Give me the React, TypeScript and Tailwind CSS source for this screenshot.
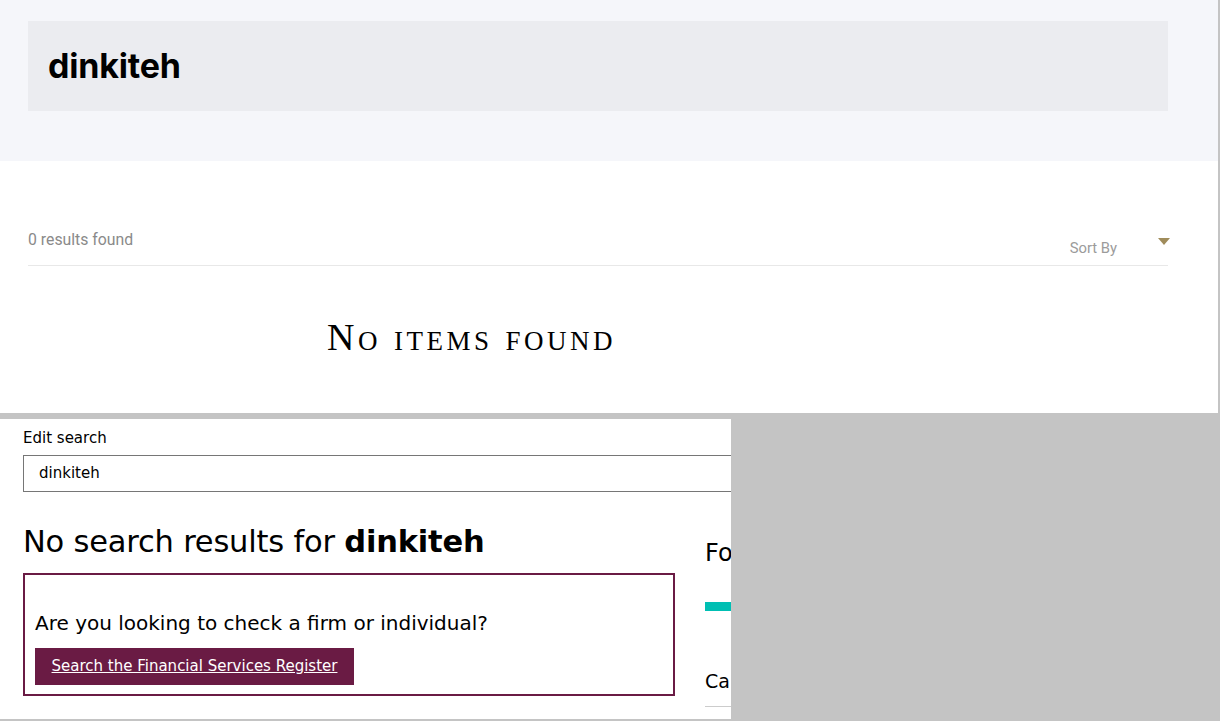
import React from "react";

export default function App() {
  return (
    <div className="w-[1220px] h-[721px] bg-[#c4c4c4] overflow-hidden">
      {/* top panel */}
      <div className="w-[1218px] h-[413px] bg-white">
        <div className="h-[161px] bg-[#f5f6fa] pt-[21px] px-[28px]">
          <div className="h-[90px] w-[1140px] bg-[#ebecf0] flex items-center pl-[20px]">
            <h1
              className="text-[34px] font-bold text-black leading-none tracking-[-0.2px]"
              style={{ fontFamily: "Inter, 'Open Sans', sans-serif" }}
            >
              dinkiteh
            </h1>
          </div>
        </div>
        <div className="px-[28px]" style={{ fontFamily: "Roboto, 'Liberation Sans', sans-serif" }}>
          <div className="w-[1140px] h-[105px] border-b border-[#e8e8e8] flex justify-between">
            <div className="pt-[69px] text-[15.8px] leading-[20px] text-[#8a8a8a]">0 results found</div>
            <div className="flex items-start">
              <div className="pt-[78px] text-[14.8px] leading-[18px] text-[#9b9b9b] mr-[41px]">Sort By</div>
              <svg width="12" height="7" viewBox="0 0 12 7" className="mt-[77px] mr-[-2px]">
                <polygon points="0,0 12,0 6,7" fill="#a08c5b" />
              </svg>
            </div>
          </div>
        </div>
        <div
          className="pl-[327px] pt-[51px] text-[38px] leading-[40px] text-black tracking-[3.5px]"
          style={{ fontFamily: "'Liberation Serif', serif", fontVariant: "small-caps" }}
        >
          No items found
        </div>
      </div>
      {/* bottom panel */}
      <div
        className="mt-[6px] w-[731px] h-[300px] bg-white overflow-hidden text-black"
        style={{ fontFamily: "'DejaVu Sans', Verdana, sans-serif" }}
      >
        <div className="pl-[23px] pt-[10px] flex flex-col">
          <div className="text-[15px] leading-[18px]">Edit search</div>
          <div className="mt-[8px] w-[800px] h-[37px] border border-[#767676] flex items-center pl-[15px] text-[15px]">
            dinkiteh
          </div>
          <div className="flex mt-[33px]">
            <div className="w-[652px] shrink-0">
              <div className="text-[30.5px] leading-[34px] tracking-[-0.2px] whitespace-nowrap">
                No search results for <span className="font-bold">dinkiteh</span>
              </div>
              <div className="mt-[14px] h-[123px] border-2 border-[#6a1b44] pl-[10px] pt-[36px]">
                <div className="text-[20px] leading-[24px] whitespace-nowrap">Are you looking to check a firm or individual?</div>
                <button className="mt-[13px] w-[319px] h-[37px] bg-[#6a1b44] text-white text-[15px] underline flex items-center justify-center whitespace-nowrap">
                  Search the Financial Services Register
                </button>
              </div>
            </div>
            <div className="ml-[30px] w-[300px] shrink-0 pt-[14px]">
              <div className="text-[24px] leading-[28px] whitespace-nowrap">Found what you need?</div>
              <div className="mt-[35px] h-[9px] w-[100px] bg-[#00bfb3]" />
              <div className="mt-[58px] text-[19px] leading-[24px] whitespace-nowrap">Can't find it?</div>
              <div className="mt-[13px] h-px w-[300px] bg-[#cccccc]" />
            </div>
          </div>
        </div>
      </div>
    </div>
  );
}
